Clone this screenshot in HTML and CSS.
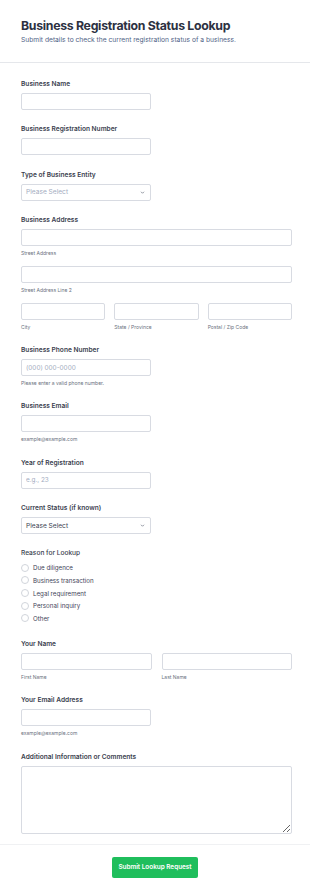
FILE: index.html
```html
<!DOCTYPE html>
<html lang="en">
<head>
    <meta charset="UTF-8">
    <meta name="viewport" content="width=device-width, initial-scale=1.0">
    <title>Business Registration Status Lookup</title>
    <link rel="stylesheet" href="styles.css">
</head>
<body>

    <div class="header">
        <h1>Business Registration Status Lookup</h1>
        <p>Submit details to check the current registration status of a business.</p>
    </div>

    <form class="form">
        <div class="field">
            <label>Business Name</label>
            <input type="text" class="half">
        </div>

        <div class="field">
            <label>Business Registration Number</label>
            <input type="text" class="half">
        </div>

        <div class="field">
            <label>Type of Business Entity</label>
            <div class="select half placeholder">
                <span>Please Select</span>
                <svg viewBox="0 0 10 10" width="5" height="5"><path d="M2 3.5 L5 6.5 L8 3.5" fill="none" stroke="#6b7280" stroke-width="1.5"/></svg>
            </div>
        </div>

        <div class="field">
            <label>Business Address</label>
            <input type="text">
            <span class="sub">Street Address</span>
            <input type="text" class="next">
            <span class="sub">Street Address Line 2</span>
            <div class="row three next">
                <div>
                    <input type="text">
                    <span class="sub">City</span>
                </div>
                <div>
                    <input type="text">
                    <span class="sub">State / Province</span>
                </div>
                <div>
                    <input type="text">
                    <span class="sub">Postal / Zip Code</span>
                </div>
            </div>
        </div>

        <div class="field">
            <label>Business Phone Number</label>
            <input type="text" class="half" placeholder="(000) 000-0000">
            <span class="sub">Please enter a valid phone number.</span>
        </div>

        <div class="field">
            <label>Business Email</label>
            <input type="text" class="half">
            <span class="sub">example@example.com</span>
        </div>

        <div class="field">
            <label>Year of Registration</label>
            <input type="text" class="half" placeholder="e.g., 23">
        </div>

        <div class="field">
            <label>Current Status (if known)</label>
            <div class="select half">
                <span>Please Select</span>
                <svg viewBox="0 0 10 10" width="5" height="5"><path d="M2 3.5 L5 6.5 L8 3.5" fill="none" stroke="#6b7280" stroke-width="1.5"/></svg>
            </div>
        </div>

        <div class="field">
            <label class="plain">Reason for Lookup</label>
            <div class="radios">
                <div class="radio"><span class="dot"></span>Due diligence</div>
                <div class="radio"><span class="dot"></span>Business transaction</div>
                <div class="radio"><span class="dot"></span>Legal requirement</div>
                <div class="radio"><span class="dot"></span>Personal inquiry</div>
                <div class="radio"><span class="dot"></span>Other</div>
            </div>
        </div>

        <div class="field">
            <label>Your Name</label>
            <div class="row two">
                <div>
                    <input type="text">
                    <span class="sub">First Name</span>
                </div>
                <div>
                    <input type="text">
                    <span class="sub">Last Name</span>
                </div>
            </div>
        </div>

        <div class="field">
            <label>Your Email Address</label>
            <input type="text" class="half">
            <span class="sub">example@example.com</span>
        </div>

        <div class="field last">
            <label>Additional Information or Comments</label>
            <textarea></textarea>
        </div>
    </form>

    <div class="footer">
        <button type="button">Submit Lookup Request</button>
    </div>

</body>
</html>
```

FILE: styles.css
```css
body {
    margin: 0;
    padding: 0;
    font-family: Inter, "Noto Sans", sans-serif;
    background-color: white;
    color: #374151;
}

.header {
    padding: 17px 21px 17px;
    border-bottom: 1px solid #e5e7eb;
}

.header h1 {
    margin: 0;
    font-size: 12.3px;
    line-height: 17px;
    font-weight: 700;
    color: #2d3142;
    letter-spacing: -0.3px;
}

.header p {
    margin: 2px 0 0;
    font-size: 6.7px;
    line-height: 9px;
    color: #4f5f86;
}

.form {
    padding: 16px 18px 0 21px;
}

.field {
    margin-bottom: 14.3px;
}

.field.last {
    margin-bottom: 10px;
}

.field label {
    display: block;
    font-size: 6.6px;
    line-height: 10px;
    font-weight: 600;
    color: #3b3f4f;
    margin-bottom: 4px;
}

.field label.plain {
    font-weight: 500;
    margin-bottom: 3px;
}

input,
.select,
textarea {
    display: block;
    box-sizing: border-box;
    width: 100%;
    height: 17px;
    margin: 0;
    padding: 0 5px 0 4px;
    border: 1px solid #d8dbe2;
    border-radius: 2px;
    background: white;
    font-family: inherit;
    font-size: 6.4px;
    color: #374151;
}

input::placeholder {
    color: #a3acc0;
}

.half {
    width: 130px;
}

.select {
    display: flex;
    align-items: center;
    justify-content: space-between;
    font-size: 6.6px;
    color: #3a3f52;
}

.select.placeholder {
    color: #a3acc0;
}

textarea {
    height: 68px;
    resize: vertical;
}

.next {
    margin-top: 9px;
}

.sub {
    display: block;
    margin-top: 4px;
    font-size: 5px;
    line-height: 7px;
    color: #6b7280;
}

.row {
    display: grid;
}

.row.three {
    grid-template-columns: 1fr 1fr 1fr;
    column-gap: 9px;
}

.row.two {
    grid-template-columns: 1fr 1fr;
    column-gap: 10px;
}

.radios {
    display: flex;
    flex-direction: column;
}

.radio {
    display: flex;
    align-items: center;
    height: 12.7px;
    font-size: 6.2px;
    color: #3f4458;
}

.radio .dot {
    box-sizing: border-box;
    width: 8px;
    height: 8px;
    border: 1px solid #d1d5db;
    border-radius: 50%;
    margin-right: 4px;
}

.footer {
    border-top: 1px solid #f0f1f3;
    padding: 12px 0 16px;
    display: flex;
    justify-content: center;
}

.footer button {
    width: 86px;
    height: 21px;
    border: none;
    border-radius: 2px;
    background-color: #1fbe5c;
    color: white;
    font-family: inherit;
    font-size: 6.4px;
    font-weight: 600;
    cursor: pointer;
}
```
